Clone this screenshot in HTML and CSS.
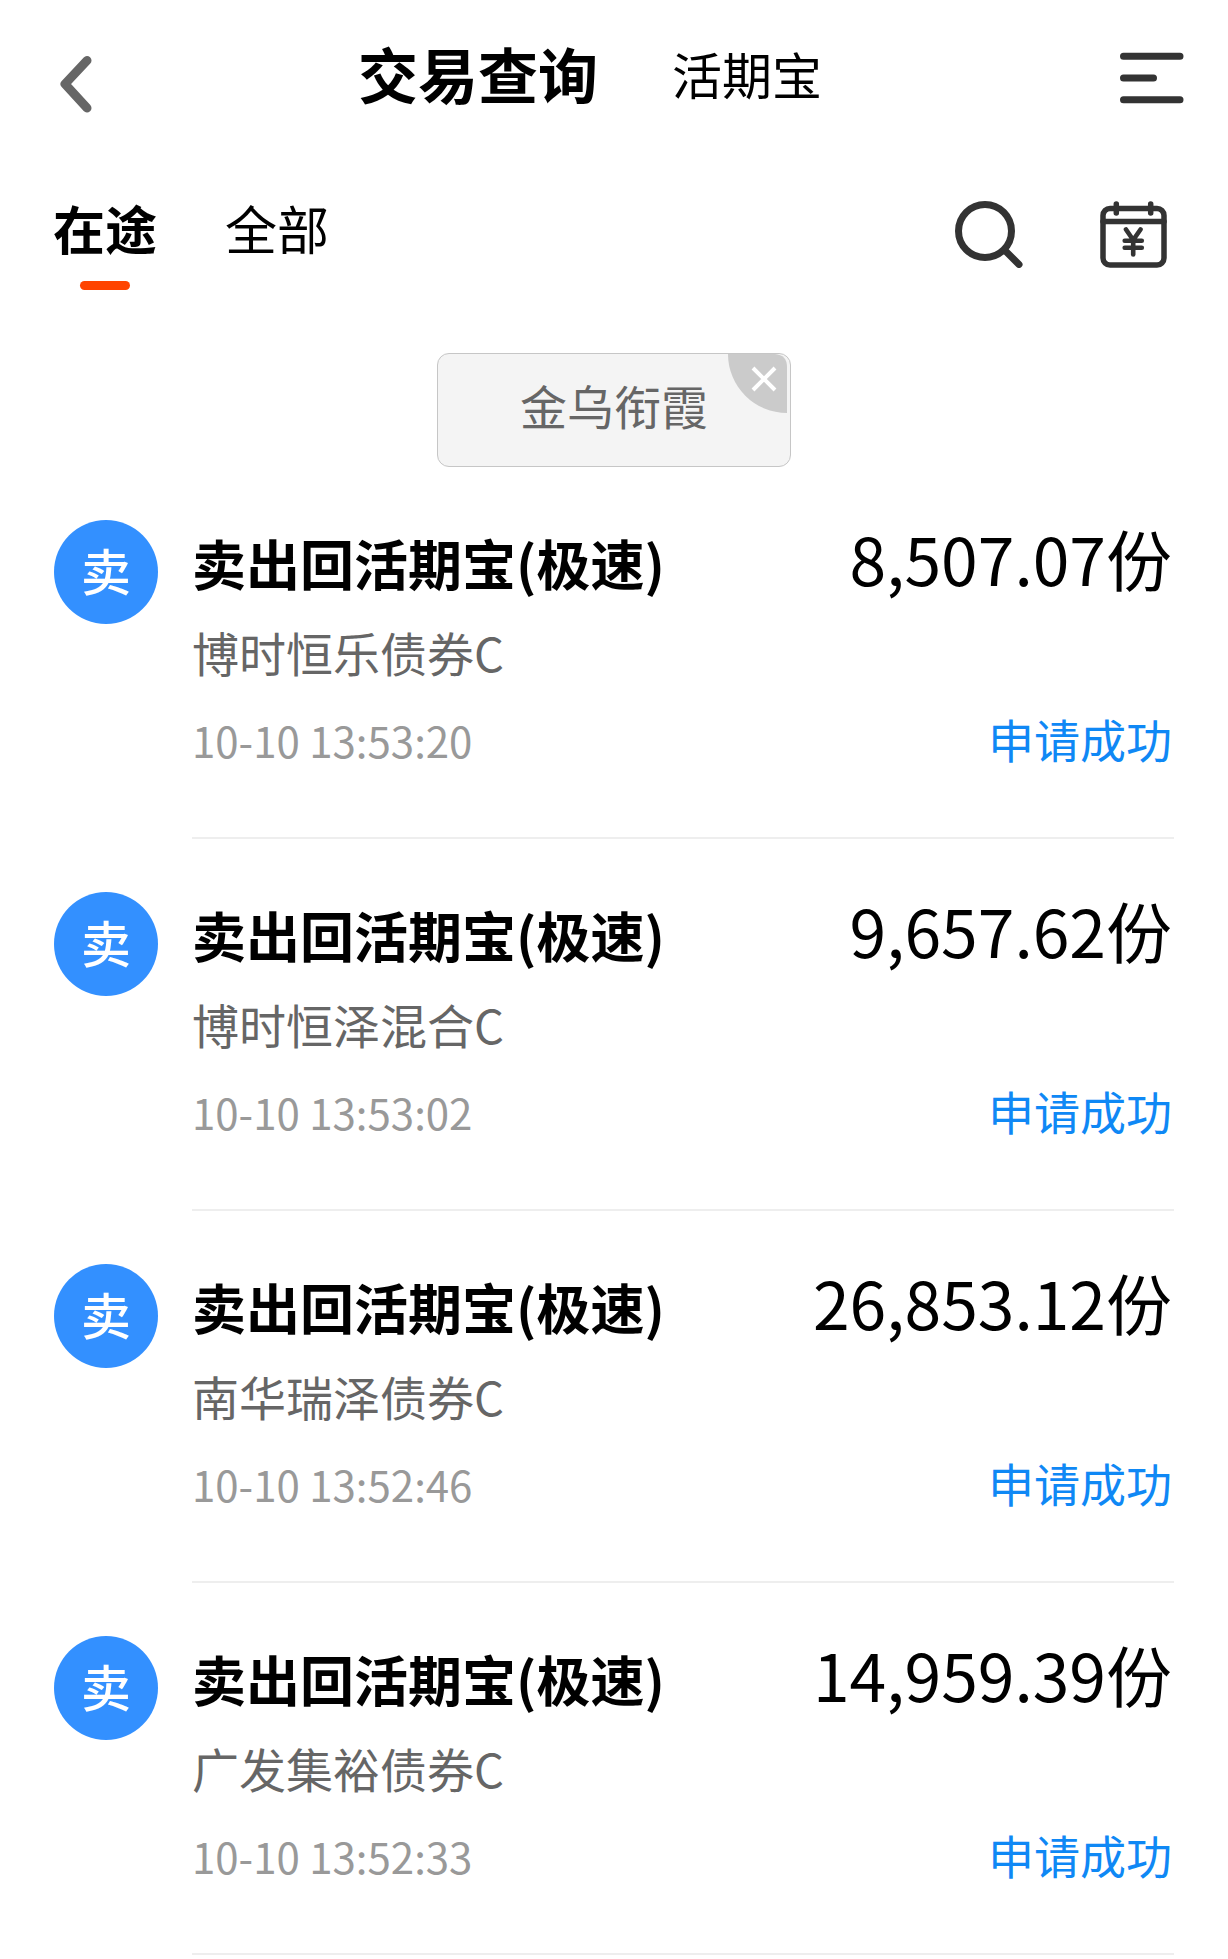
FILE: index.html
```html
<!DOCTYPE html>
<html lang="zh-CN">
<head>
  <meta charset="utf-8">
  <meta name="viewport" content="width=device-width, initial-scale=1">
  <title>交易查询</title>
  <link rel="stylesheet" href="styles.css">
</head>
<body>
  <header class="header">
    <button class="icon-btn" type="button" aria-label="返回">
      <svg width="44" height="80" viewBox="0 0 44 80" fill="none" stroke="#666" stroke-width="9" stroke-linecap="round" stroke-linejoin="round"><path d="M33 27.5 11 51 33 75"/></svg>
    </button>
    <nav class="header-nav">
      <h1 class="header-title">交易查询</h1>
      <a class="header-link" href="#">活期宝</a>
    </nav>
    <button class="icon-btn" type="button" aria-label="菜单">
      <svg width="72" height="64" viewBox="0 0 72 64" fill="none" stroke="#333" stroke-width="7" stroke-linecap="round"><path d="M7.5 15.2H64M7.5 37H37.5M7.5 58.8H64"/></svg>
    </button>
  </header>

  <main>
    <div class="toolbar">
      <nav class="tabs">
        <a class="tab tab-active" href="#">在途</a>
        <a class="tab" href="#">全部</a>
      </nav>
      <div class="tools">
        <button class="icon-btn" type="button" aria-label="搜索">
          <svg width="68" height="68" viewBox="0 0 68 68" fill="none" stroke="#333" stroke-width="7" stroke-linecap="round"><circle cx="30" cy="31" r="26.5"/><path d="M50 50.5 64 64.5"/></svg>
        </button>
        <button class="icon-btn" type="button" aria-label="交易日历">
          <svg width="68" height="68" viewBox="0 0 68 68" fill="none" stroke="#333" stroke-width="5.5" stroke-linecap="round" stroke-linejoin="round"><rect x="3" y="8.5" width="61" height="56.5" rx="7"/><path d="M3 21.5H64"/><path d="M16.3 4V13M50.7 4V13"/><path stroke-width="4.6" d="M26 29.5 33.2 40 40.5 29.5M33.2 40V54.5M24.7 40.8H41.8M24.7 47.8H41.8"/></svg>
        </button>
      </div>
    </div>

    <div class="filter">
      <div class="chip">
        <span>金乌衔霞</span>
        <button class="icon-btn chip-close" type="button" aria-label="清除筛选">
          <svg width="59" height="59" viewBox="0 0 59 59"><path fill="#cbcbcb" d="M0 0H47Q59 1 59 13V59A59 59 0 0 1 0 0Z"/><path d="M25 14 47 36M47 14 25 36" fill="none" stroke="#fff" stroke-width="4"/></svg>
        </button>
      </div>
    </div>

    <ul class="records">
      <li class="record">
        <span class="badge">卖</span>
        <div class="record-body">
          <div class="record-main">
            <h2 class="record-title">卖出回活期宝(极速)</h2>
            <p class="record-fund">博时恒乐债券C</p>
            <time class="record-time">10-10 13:53:20</time>
          </div>
          <div class="record-side">
            <span class="record-amount">8,507.07份</span>
            <span class="record-status">申请成功</span>
          </div>
        </div>
      </li>
      <li class="record">
        <span class="badge">卖</span>
        <div class="record-body">
          <div class="record-main">
            <h2 class="record-title">卖出回活期宝(极速)</h2>
            <p class="record-fund">博时恒泽混合C</p>
            <time class="record-time">10-10 13:53:02</time>
          </div>
          <div class="record-side">
            <span class="record-amount">9,657.62份</span>
            <span class="record-status">申请成功</span>
          </div>
        </div>
      </li>
      <li class="record">
        <span class="badge">卖</span>
        <div class="record-body">
          <div class="record-main">
            <h2 class="record-title">卖出回活期宝(极速)</h2>
            <p class="record-fund">南华瑞泽债券C</p>
            <time class="record-time">10-10 13:52:46</time>
          </div>
          <div class="record-side">
            <span class="record-amount">26,853.12份</span>
            <span class="record-status">申请成功</span>
          </div>
        </div>
      </li>
      <li class="record">
        <span class="badge">卖</span>
        <div class="record-body">
          <div class="record-main">
            <h2 class="record-title">卖出回活期宝(极速)</h2>
            <p class="record-fund">广发集裕债券C</p>
            <time class="record-time">10-10 13:52:33</time>
          </div>
          <div class="record-side">
            <span class="record-amount">14,959.39份</span>
            <span class="record-status">申请成功</span>
          </div>
        </div>
      </li>
    </ul>
  </main>
</body>
</html>
```
FILE: styles.css
```css
* {
  box-sizing: border-box;
}

body {
  margin: 0;
  background: #fff;
  color: #000;
  font-family: "Noto Sans CJK SC", sans-serif;
}

h1,
h2,
p,
ul {
  margin: 0;
  padding: 0;
}

a {
  color: inherit;
  text-decoration: none;
}

.icon-btn {
  display: block;
  padding: 0;
  border: 0;
  background: none;
  cursor: pointer;
}

.icon-btn svg {
  display: block;
}

/* Header */
.header {
  display: flex;
  align-items: center;
  height: 146px;
  padding: 0 40px 0 54px;
}

.header-nav {
  display: flex;
  flex: 1;
  align-items: center;
  justify-content: center;
  gap: 74px;
  padding-right: 34px;
  line-height: 88px;
  white-space: nowrap;
}

.header-title {
  font-size: 60px;
  font-weight: 700;
}

.header-link {
  font-size: 50px;
}

/* Tabs and tools */
.toolbar {
  display: flex;
  align-items: flex-start;
  justify-content: space-between;
  padding: 40px 60px 0 53px;
}

.tabs {
  display: flex;
  gap: 68px;
}

.tab {
  display: flex;
  flex-direction: column;
  align-items: center;
  gap: 11px;
  font-size: 52px;
  line-height: 84px;
}

.tab-active {
  font-weight: 700;
}

.tab-active::after {
  content: "";
  width: 50px;
  height: 9px;
  border-radius: 5px;
  background: #ff4400;
}

.tools {
  display: flex;
  gap: 77px;
  padding-top: 14px;
}

/* Filter chip */
.filter {
  display: flex;
  justify-content: center;
  padding-top: 63px;
}

.chip {
  position: relative;
  padding: 0 82px 10px;
  border: 1px solid #c6c6c6;
  border-radius: 12px;
  background: #f4f4f4;
  color: #666;
  font-size: 47px;
  line-height: 102px;
}

.chip-close {
  position: absolute;
  top: 0;
  right: 3px;
}

/* Records */
.records {
  list-style: none;
}

.record {
  display: flex;
  gap: 34px;
  padding: 0 54px;
}

.badge {
  flex: none;
  width: 104px;
  height: 104px;
  margin-top: 53px;
  border-radius: 50%;
  background: #3390ff;
  color: #fff;
  font-size: 50px;
  font-weight: 500;
  line-height: 98px;
  text-align: center;
}

.record-body {
  display: flex;
  flex: 1;
  justify-content: space-between;
  padding: 53px 2px 65px 0;
  border-bottom: 2px solid #eee;
  white-space: nowrap;
}

.record-main,
.record-side {
  display: flex;
  flex-direction: column;
}

.record-side {
  align-items: flex-end;
}

.record-title {
  font-size: 54px;
  font-weight: 700;
  line-height: 86px;
}

.record-fund {
  margin-top: 14px;
  color: #666;
  font-size: 47px;
  line-height: 64px;
}

.record-time {
  margin-top: 24px;
  color: #999;
  font-size: 42px;
  line-height: 64px;
}

.record-amount {
  font-size: 66px;
  line-height: 74px;
}

.record-status {
  margin-top: 112px;
  color: #0f88f5;
  font-size: 46px;
  line-height: 64px;
}
```
